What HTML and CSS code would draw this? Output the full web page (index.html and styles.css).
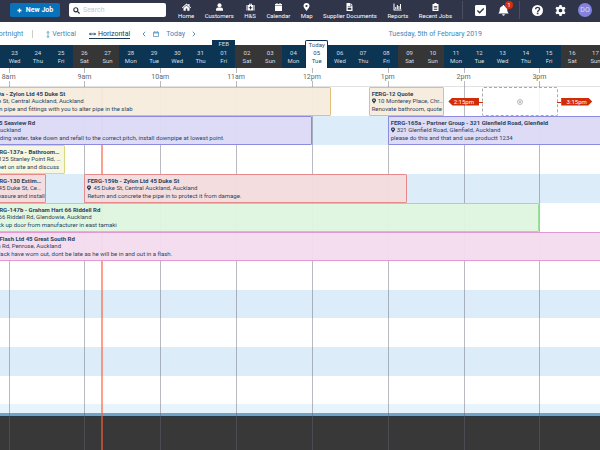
FILE: index.html
```html
<!DOCTYPE html>
<html lang="en">
<head>
<meta charset="utf-8">
<title>Schedule</title>
<link rel="stylesheet" href="styles.css">
</head>
<body>
<header class="topbar">
  <button class="new-job" type="button"><svg viewBox="0 0 10 10"><path d="M5 1v8M1 5h8" stroke="currentColor" stroke-width="2.6"/></svg>New Job</button>
  <label class="search"><svg viewBox="0 0 12 12"><circle cx="4.8" cy="4.8" r="3.5" fill="none" stroke="currentColor" stroke-width="1.9"/><path d="M7.5 7.5l3.7 3.7" stroke="currentColor" stroke-width="2.2"/></svg><input type="text" placeholder="Search" aria-label="Search"></label>
  <nav class="menu">
    <a href="#"><svg viewBox="0 0 18 16"><path d="M9 1L0 9l1.2 1.3L9 3.6l7.800 6.700L18 9l-3-2.700V2h-2.500v2zM9 5L3 10v5.500h4.500V11h3v4.500H15V10z"/></svg>Home</a>
    <a href="#"><svg viewBox="0 0 16 16"><circle cx="8" cy="4.500" r="4"/><path d="M1 15.500v-2.500q0-4 4-4h6q4 0 4 4v2.500z"/></svg>Customers</a>
    <a href="#"><svg viewBox="0 0 16 16"><path d="M5 4V1.500h6V4h-1.500V3h-3v1zM0 4h2v11H0zM14 4h2v11h-2z"/><path fill-rule="evenodd" d="M3 4h10v11H3zM7 6v2.500H4.500v2H7V13h2v-2.500h2.500v-2H9V6z"/></svg>H&amp;S</a>
    <a href="#"><svg viewBox="0 0 16 16"><path d="M1 2h3V0h2v2h4V0h2v2h3v3H1zM1 6h14v10H1z"/></svg>Calendar</a>
    <a href="#"><svg viewBox="0 0 16 16"><path fill-rule="evenodd" d="M8 0a6 6 0 0 0-6 6c0 3 3 5 6 10 3-5 6-7 6-10a6 6 0 0 0-6-6zm0 3.800a2.200 2.200 0 1 1 0 4.400 2.200 2.200 0 0 1 0-4.400z"/></svg>Map</a>
    <a href="#"><svg viewBox="0 0 16 16"><path fill-rule="evenodd" d="M2 0h7v5h5v11H2zM10 0l4 4h-4zM4.500 7v1.500h7V7zm0 3v3.500h7V10z"/></svg>Supplier Documents</a>
    <a href="#"><svg viewBox="0 0 16 16"><path d="M0 1h2v12h14v2H0zM3.500 8h2v4h-2zM6.700 4h2v8h-2zM9.900 6h2v6h-2zM13 2h2v10h-2z"/></svg>Reports</a>
    <a href="#"><svg viewBox="0 0 16 16"><path fill-rule="evenodd" d="M2 2h3.500a2.500 2.500 0 0 1 5 0H14v14H2zM4.500 6v1.400h7V6zm0 3v1.400h7V9zm0 3v1.400h7V12z"/></svg>Recent Jobs</a>
  </nav>
  <div class="tools">
    <button type="button" aria-label="Tasks"><svg viewBox="0 0 16 16"><rect width="16" height="16" rx="2"/><path d="M3.500 8l3.200 3.200L12.700 5" fill="none" stroke="#30354a" stroke-width="2"/></svg></button>
    <button type="button" aria-label="Notifications"><svg viewBox="0 0 16 16"><path d="M7 0h2v1.500c3 .5 4.500 2.500 4.500 5.500 0 3 1 4 2 5.500H.5c1-1.500 2-2.500 2-5.500 0-3 1.500-5 4.500-5.500zM6 13.500h4a2 2 0 0 1-4 0z"/></svg><span class="badge">1</span></button>
  </div>
  <div class="tools">
    <button type="button" aria-label="Help"><svg viewBox="0 0 16 16"><circle cx="8" cy="8" r="8"/><path d="M5.300 6.300C5.300 2.500 11 2.700 11 6c0 2-2.800 2-2.800 4" fill="none" stroke="#30354a" stroke-width="2"/><circle cx="8.200" cy="12.300" r="1.300" fill="#30354a"/></svg></button>
    <button type="button" aria-label="Settings"><svg viewBox="0 0 16 16"><path fill-rule="evenodd" d="M6.500 0h3l.5 2.300 1.500.9 2.300-.8 1.500 2.600L13.600 6.800v2.400L15.300 11l-1.500 2.600-2.300-.8-1.500.9L9.500 16h-3L6 13.700l-1.500-.9-2.300.8L.7 11l1.700-1.800V6.800L.7 5l1.500-2.600 2.300.8L6 2.300zM8 5.300a2.700 2.700 0 1 0 0 5.400 2.700 2.700 0 0 0 0-5.400z"/></svg></button>
    <button class="avatar" type="button">DO</button>
  </div>
</header>

<div class="viewbar">
  <div class="span"><a href="#">Fortnight</a></div>
  <div class="views">
    <a href="#"><svg viewBox="0 0 8 14"><path d="M4 1v12M1.500 3.500L4 1l2.500 2.500M1.500 10.500L4 13l2.500-2.500" fill="none" stroke="currentColor" stroke-width="1.500"/></svg>Vertical</a>
    <a class="current" href="#"><svg class="wide" viewBox="0 0 14 8"><path d="M1 4h12M3.500 1.500L1 4l2.500 2.500M10.500 1.500L13 4l-2.500 2.500" fill="none" stroke="currentColor" stroke-width="1.800"/></svg>Horizontal</a>
  </div>
  <div class="pager">
    <button type="button" aria-label="Previous"><svg viewBox="0 0 8 12"><path d="M6.500 1.500L2 6l4.500 4.500" fill="none" stroke="currentColor" stroke-width="1.800"/></svg></button>
    <button type="button" aria-label="Pick date"><svg viewBox="0 0 12 12"><path d="M1 2.500h10v8.500H1zM1 4h10M3.500 0v3M8.500 0v3" fill="none" stroke="currentColor" stroke-width="1.400"/></svg></button>
    <button type="button">Today</button>
    <button type="button" aria-label="Next"><svg viewBox="0 0 8 12"><path d="M1.500 1.500L6 6l-4.500 4.500" fill="none" stroke="currentColor" stroke-width="1.800"/></svg></button>
  </div>
  <span class="date">Tuesday, 5th of February 2019</span>
</div>

<div class="days">
  <span class="day"></span>
  <span class="day">23<br>Wed</span><span class="day">24<br>Thu</span><span class="day">25<br>Fri</span>
  <span class="day off">26<br>Sat</span><span class="day off">27<br>Sun</span>
  <span class="day">28<br>Mon</span><span class="day">29<br>Tue</span><span class="day">30<br>Wed</span><span class="day">31<br>Thu</span>
  <span class="day first"><b>FEB</b>01<br>Fri</span>
  <span class="day off">02<br>Sat</span><span class="day off">03<br>Sun</span>
  <span class="day">04<br>Mon</span>
  <span class="day today"><b>Today</b>05<br>Tue</span>
  <span class="day">06<br>Wed</span><span class="day">07<br>Thu</span><span class="day">08<br>Fri</span>
  <span class="day off">09<br>Sat</span><span class="day off">10<br>Sun</span>
  <span class="day">11<br>Mon</span><span class="day">12<br>Tue</span><span class="day">13<br>Wed</span><span class="day">14<br>Thu</span><span class="day">15<br>Fri</span>
  <span class="day off">16<br>Sat</span><span class="day off">17<br>Sun</span>
</div>

<main class="stage">
  <div class="axis">
    <span><i>8am</i></span><span><i>9am</i></span><span><i>10am</i></span><span><i>11am</i></span><span><i>12pm</i></span><span><i>1pm</i></span><span><i>2pm</i></span><span><i>3pm</i></span>
  </div>
  <div class="lanes">
    <div class="lane">
      <article class="job tan from-730 to-1215"><h3>FERG-159a - Zylon Ltd 45 Duke St</h3><p><svg class="pin" viewBox="0 0 12 16"><use href="#pin"/></svg>45 Duke St, Central Auckland, Auckland</p><p>Use 20mm pipe and fittings with you to alter pipe in the slab</p></article>
      <article class="job tan from-1245 to-1345"><h3>FERG-12 Quote</h3><p><svg class="pin" viewBox="0 0 12 16"><use href="#pin"/></svg>10 Monterey Place, Chr…</p><p>Renovate bathroom, quote</p></article>
      <div class="slot from-1415 to-1515"><span class="time start">2:15pm</span><svg viewBox="0 0 12 12"><circle cx="6" cy="6" r="5" fill="none" stroke="currentColor"/><path d="M6 3.500v5M3.500 6h5" stroke="currentColor"/></svg><span class="time end">3:15pm</span></div>
    </div>
    <div class="lane">
      <article class="job violet from-730 to-1200"><h3>FERG-1 15 Seaview Rd</h3><p><svg class="pin" viewBox="0 0 12 16"><use href="#pin"/></svg>Road, Auckland</p><p>Gutter holding water, take down and refall to the correct pitch, install downpipe at lowest point.</p></article>
      <article class="job violet from-1300 to-end"><h3>FERG-165a - Partner Group - 321 Glenfield Road, Glenfield</h3><p><svg class="pin" viewBox="0 0 12 16"><use href="#pin"/></svg>321 Glenfield Road, Glenfield, Auckland</p><p>please do this and that and use productt 1234</p></article>
    </div>
    <div class="lane">
      <article class="job yellow from-745 to-845"><h3>FERG-137a - Bathroom…</h3><p><svg class="pin" viewBox="0 0 12 16"><use href="#pin"/></svg>125 Stanley Point Rd, …</p><p>Meet on site and discuss</p></article>
    </div>
    <div class="lane">
      <article class="job red from-745 to-830"><h3>FERG-130 Estim…</h3><p><svg class="pin" viewBox="0 0 12 16"><use href="#pin"/></svg>45 Duke St, Ce…</p><p>Measure and install</p></article>
      <article class="job red from-900 to-1315"><h3>FERG-159b - Zylon Ltd 45 Duke St</h3><p><svg class="pin" viewBox="0 0 12 16"><use href="#pin"/></svg>45 Duke St, Central Auckland, Auckland</p><p>Return and concrete the pipe in to protect it from damage.</p></article>
    </div>
    <div class="lane">
      <article class="job green from-745 to-1500"><h3>FERG-147b - Graham Hart 66 Riddell Rd</h3><p><svg class="pin" viewBox="0 0 12 16"><use href="#pin"/></svg>66 Riddell Rd, Glendowie, Auckland</p><p>Pick up door from manufacturer in east tamaki</p></article>
    </div>
    <div class="lane">
      <article class="job pink from-715 to-end"><h3>FERG-160a - Mr Flash Ltd 45 Great South Rd</h3><p><svg class="pin" viewBox="0 0 12 16"><use href="#pin"/></svg>45 Great South Rd, Penrose, Auckland</p><p>Shed hinges on Jack have worn out, dont be late as he will be in and out in a flash.</p></article>
    </div>
    <div class="lane"></div><div class="lane"></div><div class="lane"></div><div class="lane"></div><div class="lane"></div>
    <div class="lane rest"></div>
  </div>
  <div class="foot"></div>
  <div class="hours"><span></span><span></span><span></span><span></span><span></span><span></span><span></span><span></span></div>
  <div class="now"></div>
</main>
<svg class="defs" aria-hidden="true"><symbol id="pin" viewBox="0 0 12 16"><path fill-rule="evenodd" d="M6 0a6 6 0 0 0-6 6c0 3 3 5 6 10 3-5 6-7 6-10a6 6 0 0 0-6-6zm0 3.500a2.500 2.500 0 1 1 0 5 2.500 2.500 0 0 1 0-5z"/></symbol></svg>
</body>
</html>
```
FILE: styles.css
```css
:root {
  --hour: 12.64vw;
  --eight: 1.43vw;
}
* { box-sizing: border-box; }
body {
  margin: 0;
  min-height: 100vh;
  display: flex;
  flex-direction: column;
  overflow-x: hidden;
  background: #fff;
  color: #2c4460;
  font: 6px/8px Roboto, "Liberation Sans", sans-serif;
}
a { color: inherit; text-decoration: none; }
button { margin: 0; padding: 0; border: 0; background: none; color: inherit; font: inherit; }
h3, p { margin: 0; font: inherit; }
.defs { position: absolute; width: 0; height: 0; }

.topbar {
  display: flex;
  align-items: center;
  height: 22px;
  padding: 0 8px 2px 10px;
  background: #30354a;
  color: #fff;
  fill: #fff;
}
.new-job {
  display: flex;
  align-items: center;
  justify-content: center;
  gap: 4px;
  width: 50px;
  height: 14px;
  border-radius: 2px;
  background: #0873ba;
  font-size: 7px;
  font-weight: bold;
}
.new-job svg { width: 5px; height: 5px; }
.search {
  display: flex;
  align-items: center;
  gap: 3px;
  width: 97px;
  height: 14px;
  margin-left: 9px;
  padding: 0 4px;
  border-radius: 2px;
  background: #fff;
  color: #26303c;
}
.search svg { flex: none; width: 7px; height: 7px; }
.search input { flex: 1; min-width: 0; padding: 0; border: 0; outline: 0; background: none; font: inherit; font-size: 7px; }
.search input::placeholder { color: #c4c8cc; }
.menu { display: flex; flex: 1; justify-content: space-between; padding: 0 10px 0 12px; white-space: nowrap; }
.menu a { display: flex; flex-direction: column; align-items: center; padding-top: 2px; }
.menu svg { height: 8px; width: 9px; margin-bottom: 1px; }
.tools { display: flex; align-items: center; gap: 12px; height: 18px; padding: 0 10px 0 12px; border-left: 1px solid #4a4e60; }
.tools + .tools { padding-right: 0; }
.tools button { position: relative; display: flex; }
.tools svg { width: 11px; height: 11px; }
.badge {
  position: absolute;
  top: -4px;
  left: 7px;
  width: 8px;
  height: 8px;
  border-radius: 50%;
  background: #d2310c;
  text-align: center;
}
.tools .avatar { align-items: center; justify-content: center; width: 14px; height: 14px; border-radius: 50%; background: #8482dc; color: #dcdcfc; font-size: 7px; }

.viewbar {
  display: flex;
  align-items: center;
  height: 23px;
  padding-top: 1px;
  color: #4488b8;
  font-size: 7px;
}
.viewbar a { display: flex; align-items: center; gap: 2px; }
.span { margin-left: -5px; padding-right: 9px; border-right: 1px solid #ccc; }
.views { display: flex; gap: 13px; padding: 0 12px 0 13px; }
.views svg { width: 4px; height: 7px; }
.views svg.wide { width: 7px; height: 4px; }
.views .current { border-bottom: 1px solid #173d59; margin-bottom: -1px; color: #173d59; }
.pager { display: flex; align-items: center; gap: 7px; }
.pager svg { display: block; width: 4px; height: 6px; }
.pager button:nth-child(2) svg { width: 6px; height: 6px; }
.date { margin-left: auto; padding-right: 118px; }

.days {
  display: grid;
  grid-template-columns: 3px repeat(26, 3.874vw);
  background: #0c3553;
  color: #d4dde4;
  text-align: center;
}
.day { position: relative; height: 23px; padding-top: 4px; line-height: 8px; }
.day.off { background: #363636; }
.day b { position: absolute; top: -5px; left: 0; right: 0; height: 9px; line-height: 8px; font-weight: normal; }
.first b { background: #0c3553; }
.day.today { background: #fff; color: #2c4d68; border: solid #0c2e4c; border-width: 0 1px; }
.today b { left: -1px; right: -1px; line-height: 7px; background: #fff; border: 1px solid #0c2e4c; border-bottom: 0; border-radius: 2px 2px 0 0; }

.stage {
  flex: 1;
  display: grid;
  grid-template-columns: 100%;
  grid-template-rows: 19px 1fr 37px;
  overflow: hidden;
}
.axis {
  grid-area: 1 / 1;
  display: grid;
  grid-template-columns: repeat(8, var(--hour));
  margin-left: calc(var(--eight) - var(--hour) / 2);
  padding-top: 5px;
  border-bottom: 1px solid #e2e2e2;
  color: #666;
  font-size: 7px;
  text-align: center;
}
.axis i { position: relative; z-index: 2; display: inline-block; background: #fff; font-style: normal; }
.hours {
  grid-area: 1 / 1 / 4 / 2;
  z-index: 1;
  display: grid;
  grid-template-columns: repeat(8, var(--hour));
  margin-left: var(--eight);
}
.hours span { border-left: 1px solid rgba(100, 100, 115, 0.45); }
.now { grid-area: 2 / 1 / 4 / 2; z-index: 1; width: 2px; margin-left: 16.75vw; background: rgba(255, 95, 60, 0.6); }
.lanes { grid-area: 2 / 1; display: flex; flex-direction: column; }
.lane {
  flex: 10 1 0;
  display: grid;
  grid-template-columns: repeat(36, calc(var(--hour) / 4));
  grid-template-rows: 100%;
  margin-left: calc(var(--eight) - var(--hour));
}
.lane:nth-child(even) { background: #dcedf9; }
.lane.rest { flex-grow: 3; background: #e8f4fc; }
.foot { grid-area: 3 / 1; border-top: 3px solid #6fa4c8; background: #383838; box-shadow: inset 0 1px #273744; }

.job {
  grid-row: 1;
  position: relative;
  z-index: 2;
  min-width: 0;
  padding: 2px 0 2px 2px;
  overflow: hidden;
  border: 1px solid;
  border-radius: 1px;
  white-space: nowrap;
}
.job h3 { line-height: 7px; font-weight: bold; }
.pin { width: 4px; height: 6px; margin-right: 2px; vertical-align: -1px; fill: #1c3550; }
.tan { background: rgba(245, 236, 220, 0.95); border-color: #e2bf7c; }
.violet { background: rgba(220, 218, 245, 0.95); border-color: #8d8be0; }
.yellow { background: rgba(247, 247, 222, 0.95); border-color: #dada7c; }
.red { background: rgba(243, 220, 220, 0.95); border-color: #e68a8c; }
.green { background: rgba(223, 246, 223, 0.95); border-color: #9adf9a; }
.pink { background: rgba(243, 220, 238, 0.95); border-color: #e39ad2; }

.from-715 { grid-column-start: 2; }
.from-730 { grid-column-start: 3; }
.from-745 { grid-column-start: 4; }
.from-900 { grid-column-start: 9; }
.from-1245 { grid-column-start: 24; }
.from-1300 { grid-column-start: 25; }
.from-1415 { grid-column-start: 30; }
.to-830 { grid-column-end: 7; }
.to-845 { grid-column-end: 8; }
.to-1200 { grid-column-end: 21; }
.to-1215 { grid-column-end: 22; }
.to-1315 { grid-column-end: 26; }
.to-1345 { grid-column-end: 28; }
.to-1500 { grid-column-end: 33; }
.to-1515 { grid-column-end: 34; }
.to-end { grid-column-end: 37; }

.slot {
  grid-row: 1;
  position: relative;
  z-index: 2;
  display: flex;
  align-items: center;
  justify-content: center;
  border: 1px dashed #aaa;
  border-radius: 2px;
  background: rgba(255, 255, 255, 0.85);
  color: #777;
}
.slot svg { width: 6px; height: 6px; }
.time {
  position: absolute;
  top: calc(50% - 4px);
  width: 31px;
  height: 8px;
  background: #d02c08;
  color: #fff;
  text-align: center;
}
.start { right: calc(100% + 4px); clip-path: polygon(0 50%, 4px 0, 100% 0, 100% 100%, 4px 100%); }
.end { left: calc(100% + 4px); clip-path: polygon(100% 50%, 27px 0, 0 0, 0 100%, 27px 100%); }
.slot::before, .slot::after { content: ""; position: absolute; top: 50%; width: 4px; height: 1px; background: #d02c08; }
.slot::before { right: 100%; }
.slot::after { left: 100%; }
```
